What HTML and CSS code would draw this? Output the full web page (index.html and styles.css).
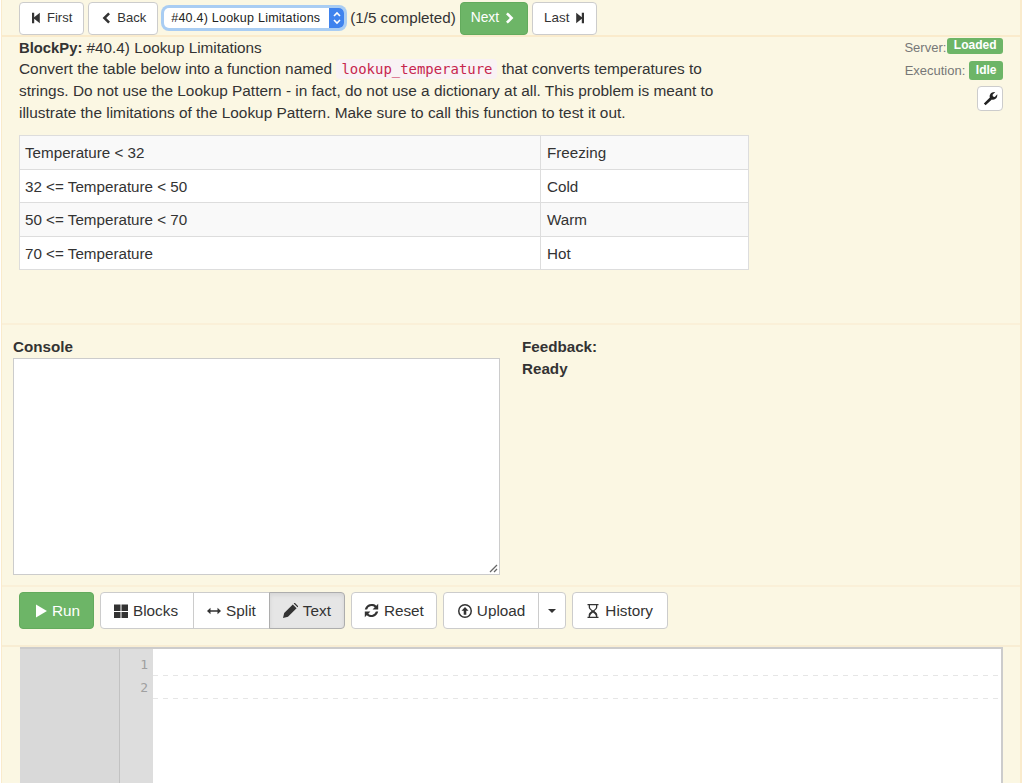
FILE: index.html
```html
<!DOCTYPE html>
<html lang="en">
<head>
<meta charset="utf-8">
<title>BlockPy</title>
<link rel="stylesheet" href="styles.css">
</head>
<body>
<div class="app">
  <nav class="nav">
    <button class="btn nav-btn"><svg class="ico" viewBox="0 0 10 12"><path d="M1 .8h2.200v4.400L8.800.8v10.400L3.200 6.800v4.400H1z"/></svg>First</button>
    <button class="btn nav-btn back"><svg class="ico" viewBox="0 0 10 12"><path d="M7.200 .4L9 2.200 5.200 6 9 9.800l-1.800 1.800L1.600 6z"/></svg>Back</button>
    <div class="select"><span class="select-text">#40.4) Lookup Limitations</span><span class="select-arrow"><svg viewBox="0 0 14 18" width="14" height="18"><path d="M4 7l3-3 3 3M4 11l3 3 3-3" fill="none" stroke="#fff" stroke-width="1.600"/></svg></span></div>
    <span class="progress">(1/5 completed)</span>
    <button class="btn nav-btn next">Next<svg class="ico ico-after" viewBox="0 0 10 12"><path d="M2.800 .4L1 2.200 4.800 6 1 9.800l1.800 1.800L8.400 6z"/></svg></button>
    <button class="btn nav-btn last">Last<svg class="ico ico-after" viewBox="0 0 10 12"><path d="M9 .8H6.800v4.400L1.200.8v10.400l5.600-4.400v4.400H9z"/></svg></button>
  </nav>

  <section class="problem">
    <div class="problem-text">
      <div class="title"><strong>BlockPy:</strong> #40.4) Lookup Limitations</div>
      <p class="desc">Convert the table below into a function named <code>lookup_temperature</code> that converts temperatures to strings. Do not use the Lookup Pattern - in fact, do not use a dictionary at all. This problem is meant to illustrate the limitations of the Lookup Pattern. Make sure to call this function to test it out.</p>
      <table class="table">
        <tr><td class="c1">Temperature &lt; 32</td><td class="c2">Freezing</td></tr>
        <tr><td class="c1">32 &lt;= Temperature &lt; 50</td><td class="c2">Cold</td></tr>
        <tr><td class="c1">50 &lt;= Temperature &lt; 70</td><td class="c2">Warm</td></tr>
        <tr><td class="c1">70 &lt;= Temperature</td><td class="c2">Hot</td></tr>
      </table>
    </div>
    <aside class="status">
      <div class="status-row server">Server:<span class="label">Loaded</span></div>
      <div class="status-row exec">Execution:<span class="label label-idle">Idle</span></div>
      <button class="btn wrench"><svg viewBox="0 0 14 14" width="15" height="15"><path d="M.8 11.600L6.400 6C5.600 3.400 7.800.4 11.400.9L8.900 3.400l.4 1.700 1.700.4L13.300 3c.5 3.600-2.500 5.800-5 4.900L2.400 13.400z" fill="#222"/></svg></button>
    </aside>
  </section>

  <section class="console">
    <div class="console-left">
      <div class="heading">Console</div>
      <div class="console-box"><svg class="grip" viewBox="0 0 9 9" width="9" height="9"><path d="M1 8l7-7M5 8l3-3" stroke="#666" stroke-width="1.300"/></svg></div>
    </div>
    <div class="feedback">
      <div class="heading">Feedback:</div>
      <div class="heading">Ready</div>
    </div>
  </section>

  <section class="toolbar">
    <button class="btn big run"><svg class="ico-b ico-play" viewBox="0 0 12 14"><path d="M0 0l12 7-12 7z"/></svg>Run</button>
    <div class="group">
      <button class="btn big blocks"><svg class="ico-b" viewBox="0 0 14 14"><path d="M0 .5h6.500V7H0zM7.500 .5H14V7H7.500zM0 8h6.500v6H0zM7.500 8H14v6H7.500z"/></svg>Blocks</button>
      <button class="btn big"><svg class="ico-b" viewBox="0 0 14 14"><path d="M0 7l3.500-3.200v2.400h7V3.800L14 7l-3.500 3.200V7.800h-7v2.400z"/></svg>Split</button>
      <button class="btn big active"><svg class="ico-b ico-wide" viewBox="0 0 15 15"><path d="M0 15l1.200-5L9.800 1.400l3.800 3.800L5 13.800zM10.700.5l.6-.5h.7l3 3v.7l-.5.600z"/></svg>Text</button>
    </div>
    <button class="btn big reset"><svg class="ico-b ico-wide" viewBox="0 0 15 15"><path d="M.8 6.400A7 7 0 0 1 12.300 2.700L14.200.8v5.600H8.600l2.100-2.100A4.700 4.700 0 0 0 3.100 6.400zM14.200 8.600A7 7 0 0 1 2.700 12.300L.8 14.200V8.600h5.600l-2.100 2.100a4.700 4.700 0 0 0 7.600-2.100z"/></svg>Reset</button>
    <div class="group">
      <button class="btn big upload"><svg class="ico-b" viewBox="0 0 14 14"><path fill-rule="evenodd" d="M7 0a7 7 0 1 1 0 14A7 7 0 0 1 7 0zm0 1.500a5.500 5.500 0 1 0 0 11 5.500 5.500 0 0 0 0-11zM7 3l3.500 3.700H8.300v4H5.700v-4H3.500z"/></svg>Upload</button>
      <button class="btn big caret-btn"><span class="caret"></span></button>
    </div>
    <button class="btn big history"><svg class="ico-b" viewBox="0 0 14 14"><path fill-rule="evenodd" d="M1.500 0h11v1.300h-1.200V3.200c0 2-2.300 2.800-2.800 3.800.5 1 2.800 1.800 2.800 3.800v1.900h1.200V14h-11v-1.300h1.200V10.800c0-2 2.300-2.800 2.800-3.800-.5-1-2.800-1.800-2.800-3.800V1.300H1.500zM4 1.300v1.900c0 1.500 2.300 2.500 3 3.300.7-.8 3-1.800 3-3.300V1.300zM7 8.600c-.8 1-3 1.800-3 4.100h6c0-2.300-2.200-3.100-3-4.100z"/></svg>History</button>
  </section>

  <section class="editor-wrap">
    <div class="editor">
      <div class="gutter-blank"></div>
      <div class="gutter"><div class="num">1</div><div class="num">2</div></div>
      <div class="code"><div class="code-line"></div><div class="code-line"></div></div>
    </div>
  </section>
</div>
</body>
</html>
```
FILE: styles.css
```css
* { box-sizing: border-box; }
html, body { margin: 0; height: 783px; overflow: hidden; background: #fff; }
body {
  padding: 0 2px 0 1px;
  font-family: "Liberation Sans", Arial, sans-serif;
  font-size: 15.2px;
  line-height: 22px;
  color: #333;
}
.app {
  height: 783px;
  background: #fbf7e3;
  border-left: 1px solid #faebcc;
  border-right: 2px solid #faebcc;
  display: flex;
  flex-direction: column;
}
.btn {
  font: inherit;
  color: #333;
  background: #fff;
  border: 1px solid #ccc;
  border-radius: 4px;
  display: inline-flex;
  align-items: center;
  justify-content: center;
  cursor: pointer;
  padding: 0;
}
.nav {
  height: 37px;
  flex: none;
  display: flex;
  align-items: center;
  padding: 1px 0 0 17px;
  border-bottom: 2px solid #faebcc;
}
.nav-btn { height: 33px; font-size: 13px; padding: 0 11px; margin-right: 4px; }
.back { padding: 0 11px 0 12px; }
.last { font-size: 13.400px; }
.ico { width: 10px; height: 12px; margin-right: 6px; fill: #333; }
.ico-after { margin: 0 0 0 6px; }
.select {
  width: 180px;
  height: 20px;
  margin: 0 6px 0 2px;
  background: #fff;
  border-radius: 5px;
  box-shadow: 0 0 0 3px #a9cdf3;
  display: flex;
  align-items: center;
  justify-content: space-between;
  font-size: 12.500px;
  letter-spacing: .24px;
  color: #222;
  padding-left: 7px;
}
.select-arrow {
  width: 15px;
  height: 20px;
  border-radius: 0 5px 5px 0;
  background: #3f83ee;
  display: flex;
  align-items: center;
  justify-content: center;
}
.progress { margin-right: 4px; white-space: nowrap; }
.next { background: #6db567; border-color: #63ab5d; color: #fff; font-size: 13.800px; padding-left: 10px; padding-right: 12px; }
.next .ico { fill: #fff; }
.problem {
  height: 288px;
  flex: none;
  display: flex;
  justify-content: space-between;
  padding: 0 17px 0 17px;
  border-bottom: 2px solid #faf0d8;
}
.problem-text { width: 730px; }
.title { height: 21px; line-height: 22px; font-size: 15.300px; }
.title strong { font-size: 14.800px; }
.desc { margin: 0 0 11px; width: 716px; font-size: 15.400px; line-height: 22px; }
code {
  font-family: "DejaVu Sans Mono", "Liberation Mono", monospace;
  font-size: 13.950px;
  line-height: 1;
  color: #c7254e;
  background: #f9f2f4;
  border-radius: 4px;
  padding: 2px 5px;
}
.table {
  width: 730px;
  border-collapse: collapse;
  background: #fff;
  table-layout: fixed;
}
.table td { border: 1px solid #ddd; padding: 6px 5px 4px; height: 33.600px; }
.table .c1 { width: 521px; }
.table .c2 { padding-left: 6px; }
.table tr:nth-child(odd) { background: #f9f9f9; }
.status { display: flex; flex-direction: column; align-items: flex-end; }
.status-row { display: flex; align-items: center; color: #777; font-size: 13px; }
.server { height: 22px; }
.exec { height: 23px; }
.label {
  background: #6db567;
  color: #fff;
  font-weight: bold;
  font-size: 12px;
  line-height: 15px;
  border-radius: 3px;
  padding: 0 6.500px;
  margin: 1px 0 0 1px;
  height: 16px;
  align-self: flex-start;
}
.label-idle { margin: 2px 0 0 4px; height: 19px; line-height: 18px; padding: 0 6.500px; }
.wrench { width: 26px; height: 25px; margin-top: 4px; }
.console {
  height: 262px;
  flex: none;
  display: flex;
  padding: 11px 0 0 11px;
  border-bottom: 2px solid #faf0d8;
}
.heading { font-weight: bold; }
.console-left { width: 487px; }
.console-box {
  width: 487px;
  height: 217px;
  background: #fff;
  border: 1px solid #ccc;
  display: flex;
  justify-content: flex-end;
  align-items: flex-end;
}
.grip { margin: 0 1px 1px 0; }
.feedback { margin-left: 22px; }
.toolbar {
  height: 60px;
  flex: none;
  display: flex;
  align-items: flex-start;
  gap: 6px;
  padding: 5px 0 0 17px;
  border-bottom: 2px solid #f8edd3;
}
.big { height: 37px; font-size: 15.300px; padding: 0 13px; }
.blocks { padding-right: 15px; }
.reset { padding: 0 12px; }
.upload { padding-left: 14px; }
.history { padding-right: 14px; }
.ico-b { width: 14px; height: 14px; margin-right: 5px; fill: #333; }
.ico-wide { width: 15px; height: 15px; }
.ico-play { width: 12px; }
.run { background: #6db567; border-color: #63ab5d; color: #fff; width: 75px; justify-content: flex-start; padding-left: 16px; }
.run .ico-b { fill: #fff; }
.group { display: flex; }
.group .btn { border-radius: 0; margin-left: -1px; }
.group .btn:first-child { border-radius: 4px 0 0 4px; margin-left: 0; }
.group .btn:last-child { border-radius: 0 4px 4px 0; }
.active { background: #e6e6e6; border-color: #adadad; box-shadow: inset 0 2px 4px rgba(0,0,0,.08); }
.caret-btn { width: 28px; padding: 0; }
.caret { border-top: 4px solid #333; border-left: 4px solid transparent; border-right: 4px solid transparent; }
.editor-wrap { flex: 1; padding: 0 17px 0 18px; min-height: 0; }
.editor {
  height: 100%;
  background: #fff;
  border-top: 2px solid #ccc;
  border-right: 2px solid #ccc;
  display: flex;
}
.gutter-blank { width: 100px; background: #d9d9d9; border-right: 1px solid #c2c2c2; flex: none; }
.gutter {
  width: 33px;
  flex: none;
  background: #ddd;
  font-family: "DejaVu Sans Mono", monospace;
  font-size: 13px;
  color: #a0a0a0;
  text-align: right;
  padding: 4px 5px 0 0;
}
.num { height: 23px; line-height: 23px; }
.code { flex: 1; padding-top: 4px; }
.code-line {
  height: 23px;
  background: repeating-linear-gradient(90deg, #e6e6e6 0 5px, transparent 5px 10px) left bottom / 100% 1px no-repeat;
}
```
